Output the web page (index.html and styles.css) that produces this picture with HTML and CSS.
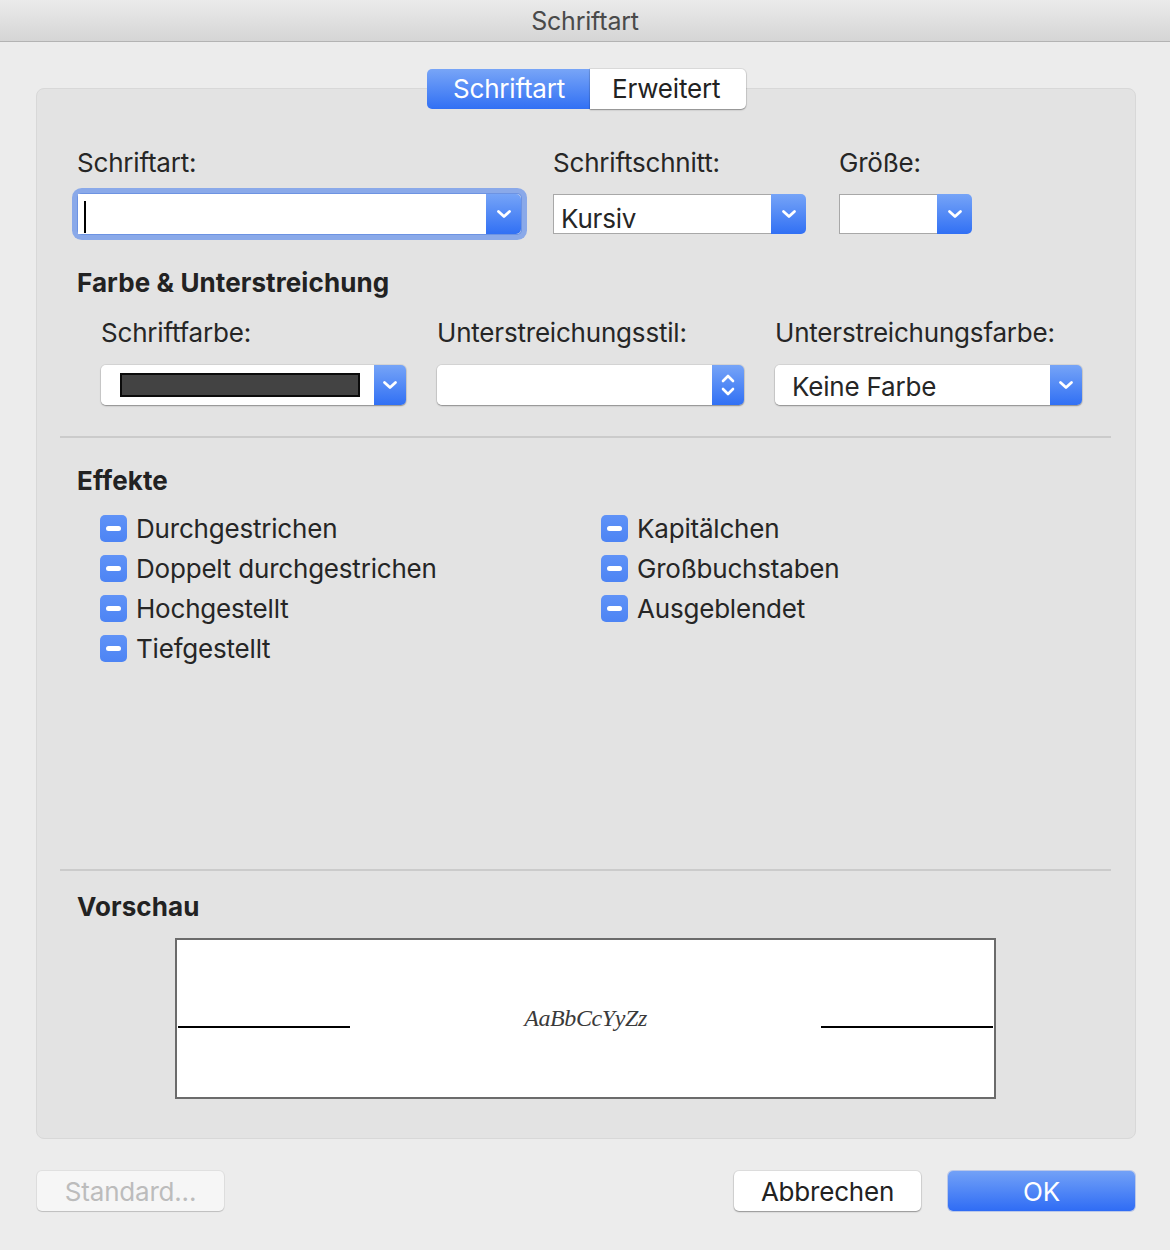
FILE: index.html
```html
<!DOCTYPE html>
<html lang="de">
<head>
<meta charset="utf-8">
<title>Schriftart</title>
<link rel="stylesheet" href="styles.css">
</head>
<body>
<div class="titlebar">Schriftart</div>
<div class="window">
  <div class="tabs">
    <div class="tab active">Schriftart</div>
    <div class="tab">Erweitert</div>
  </div>
  <div class="panel">
    <div class="row row-font">
      <div class="col col-font">
        <div class="label">Schriftart:</div>
        <div class="combo focus">
          <div class="combo-text"><span class="caret"></span></div>
          <div class="blue-btn"><svg width="16" height="10" viewBox="0 0 16 10"><path d="M2.5 2.5 L8 7.5 L13.5 2.5" fill="none" stroke="#fff" stroke-width="2.8" stroke-linecap="round" stroke-linejoin="round"/></svg></div>
        </div>
      </div>
      <div class="col col-style">
        <div class="label">Schriftschnitt:</div>
        <div class="combo">
          <div class="combo-text">Kursiv</div>
          <div class="blue-btn"><svg width="16" height="10" viewBox="0 0 16 10"><path d="M2.5 2.5 L8 7.5 L13.5 2.5" fill="none" stroke="#fff" stroke-width="2.8" stroke-linecap="round" stroke-linejoin="round"/></svg></div>
        </div>
      </div>
      <div class="col col-size">
        <div class="label">Größe:</div>
        <div class="combo">
          <div class="combo-text"></div>
          <div class="blue-btn"><svg width="16" height="10" viewBox="0 0 16 10"><path d="M2.5 2.5 L8 7.5 L13.5 2.5" fill="none" stroke="#fff" stroke-width="2.8" stroke-linecap="round" stroke-linejoin="round"/></svg></div>
        </div>
      </div>
    </div>

    <div class="heading heading-color">Farbe &amp; Unterstreichung</div>

    <div class="row row-popups">
      <div class="col col-pop">
        <div class="label">Schriftfarbe:</div>
        <div class="popup">
          <div class="popup-text"><span class="swatch"></span></div>
          <div class="blue-btn narrow"><svg width="16" height="10" viewBox="0 0 16 10"><path d="M2.5 2.5 L8 7.5 L13.5 2.5" fill="none" stroke="#fff" stroke-width="2.8" stroke-linecap="round" stroke-linejoin="round"/></svg></div>
        </div>
      </div>
      <div class="col col-pop wide">
        <div class="label">Unterstreichungsstil:</div>
        <div class="popup">
          <div class="popup-text"></div>
          <div class="blue-btn narrow"><svg width="16" height="26" viewBox="0 0 16 26"><path d="M3 9 L8 4 L13 9 M3 17 L8 22 L13 17" fill="none" stroke="#fff" stroke-width="2.6" stroke-linecap="round" stroke-linejoin="round"/></svg></div>
        </div>
      </div>
      <div class="col col-pop wide">
        <div class="label">Unterstreichungsfarbe:</div>
        <div class="popup">
          <div class="popup-text">Keine Farbe</div>
          <div class="blue-btn narrow"><svg width="16" height="10" viewBox="0 0 16 10"><path d="M2.5 2.5 L8 7.5 L13.5 2.5" fill="none" stroke="#fff" stroke-width="2.8" stroke-linecap="round" stroke-linejoin="round"/></svg></div>
        </div>
      </div>
    </div>

    <div class="sep sep-1"></div>

    <div class="heading heading-effects">Effekte</div>

    <div class="effects">
      <div class="effect-col left">
        <div class="check"><span class="box"><span class="dash"></span></span>Durchgestrichen</div>
        <div class="check"><span class="box"><span class="dash"></span></span>Doppelt durchgestrichen</div>
        <div class="check"><span class="box"><span class="dash"></span></span>Hochgestellt</div>
        <div class="check"><span class="box"><span class="dash"></span></span>Tiefgestellt</div>
      </div>
      <div class="effect-col">
        <div class="check"><span class="box"><span class="dash"></span></span>Kapitälchen</div>
        <div class="check"><span class="box"><span class="dash"></span></span>Großbuchstaben</div>
        <div class="check"><span class="box"><span class="dash"></span></span>Ausgeblendet</div>
      </div>
    </div>

    <div class="sep sep-2"></div>

    <div class="heading heading-preview">Vorschau</div>

    <div class="preview">
      <span class="pline"></span>
      <span class="ptext">AaBbCcYyZz</span>
      <span class="pline"></span>
    </div>
  </div>

  <div class="footer">
    <div class="btn disabled">Standard...</div>
    <div class="spacer"></div>
    <div class="btn">Abbrechen</div>
    <div class="btn primary">OK</div>
  </div>
</div>
</body>
</html>
```

FILE: styles.css
```css
* { box-sizing: border-box; }

html, body {
  margin: 0;
  padding: 0;
}

body {
  width: 1170px;
  height: 1250px;
  background: #ececec;
  font-family: Inter, "Liberation Sans", sans-serif;
  font-size: 26px;
  letter-spacing: -0.2px;
  color: #262626;
  overflow: hidden;
}

.titlebar {
  height: 42px;
  background: linear-gradient(#ebebeb, #d5d5d5);
  border-bottom: 1px solid #b3b3b3;
  text-align: center;
  line-height: 42px;
  color: #4a4a4a;
  font-size: 25px;
}

.window {
  padding-top: 27px;
}

.tabs {
  display: flex;
  justify-content: center;
  position: relative;
  z-index: 2;
  margin-left: 3px;
}

.tab {
  height: 40px;
  line-height: 40px;
  padding: 0 0 0 22px;
  background: #fff;
  color: #222;
  border-radius: 0 5px 5px 0;
  box-shadow: 0 0 0 1px rgba(0,0,0,0.07), 0 1px 1.5px rgba(0,0,0,0.35);
  width: 156px;
}

.tab.active {
  width: 163px;
  padding: 0 0 0 26px;
  background: linear-gradient(#78a5f7, #3170f4);
  color: #fff;
  border-radius: 5px 0 0 5px;
  box-shadow: none;
}

.panel {
  margin: -21px 0 0 36px;
  width: 1100px;
  height: 1051px;
  background: #e3e3e3;
  border: 1px solid #d8d8d8;
  border-radius: 8px;
  padding: 58px 24px 0 23px;
}

.row {
  display: flex;
}

.label {
  line-height: 32px;
  height: 32px;
  white-space: nowrap;
}

.row-font {
  padding-left: 17px;
}

.col-font { width: 444px; margin-right: 32px; }
.col-style { width: 253px; margin-right: 33px; }
.col-size { width: 133px; }

.combo {
  margin-top: 15px;
  height: 40px;
  display: flex;
}

.combo-text {
  flex: 1;
  background: #fff;
  border: 1px solid #a8a8a8;
  border-right: none;
  padding: 5px 0 0 7px;
  line-height: 38px;
  white-space: nowrap;
}

.combo.focus {
  margin-left: 1px;
  border-radius: 4px;
  box-shadow: 0 0 0 1px #6d93e2, 0 0 0 6px #8aa9e9;
}

.combo.focus .combo-text {
  border: none;
  padding: 0 0 0 6px;
  display: flex;
  align-items: flex-end;
}

.caret {
  display: block;
  width: 2px;
  height: 32px;
  background: #000;
  margin-bottom: 1px;
}

.blue-btn {
  width: 35px;
  flex: none;
  background: linear-gradient(#76a4f7, #3170f4);
  border-radius: 0 5px 5px 0;
  display: flex;
  align-items: center;
  justify-content: center;
}

.blue-btn.narrow {
  width: 32px;
}

.heading {
  font-weight: 700;
  line-height: 32px;
  height: 32px;
  padding-left: 17px;
  color: #222;
  letter-spacing: 0.1px;
}

.heading-color { margin-top: 33px; }

.row-popups {
  margin-top: 18px;
  padding-left: 41px;
}

.col-pop { width: 305px; margin-right: 31px; }
.col-pop.wide { width: 307px; }
.col-pop:last-child { margin-right: 0; }

.popup {
  margin-top: 16px;
  height: 40px;
  display: flex;
  border-radius: 5px;
  box-shadow: 0 0 0 1px rgba(0,0,0,0.06), 0 1px 1.5px rgba(0,0,0,0.35);
}

.popup-text {
  flex: 1;
  background: #fff;
  border-radius: 5px 0 0 5px;
  padding: 3px 0 0 17px;
  line-height: 37px;
  display: flex;
  align-items: center;
}

.swatch {
  display: block;
  width: 240px;
  height: 24px;
  margin: 0 0 3px 2px;
  background: #434343;
  border: 2px solid #0b0b0b;
}

.sep {
  height: 2px;
  background: #cbcbcb;
}

.sep-1 { margin-top: 31px; }

.heading-effects { margin-top: 27px; }

.effects {
  margin-top: 11px;
  padding-left: 40px;
  display: flex;
  height: 160px;
}

.effect-col.left { width: 501px; }

.check {
  height: 40px;
  display: flex;
  align-items: center;
  white-space: nowrap;
}

.box {
  width: 27px;
  height: 27px;
  border-radius: 5px;
  background: linear-gradient(#5f92f7, #4d84f4);
  display: flex;
  align-items: center;
  justify-content: center;
  margin-right: 9px;
  margin-top: 1px;
}

.dash {
  display: block;
  width: 15px;
  height: 5px;
  border-radius: 3px;
  background: #fff;
}

.sep-2 { margin-top: 201px; }

.heading-preview { margin-top: 20px; }

.preview {
  margin: 15px 0 0 115px;
  width: 821px;
  height: 161px;
  background: #fff;
  border: 2px solid #6b6b6b;
  display: flex;
  align-items: center;
  justify-content: space-between;
  padding: 0 1px;
}

.pline {
  display: block;
  width: 172px;
  height: 2px;
  background: #000;
  margin-top: 16px;
}

.ptext {
  font-family: "Liberation Serif", serif;
  font-style: italic;
  font-size: 24px;
  color: #3a3a3a;
  letter-spacing: -0.4px;
  margin-top: 0;
}

.footer {
  margin-top: 32px;
  padding: 0 35px 0 37px;
  display: flex;
}

.spacer { flex: 1; }

.btn {
  width: 187px;
  height: 40px;
  line-height: 42px;
  text-align: center;
  background: #fff;
  border-radius: 5px;
  box-shadow: 0 0 0 1px rgba(0,0,0,0.06), 0 1px 1.5px rgba(0,0,0,0.35);
  color: #222;
}

.btn.disabled {
  background: #f6f6f6;
  color: #bcbcbc;
  box-shadow: 0 0 0 1px rgba(0,0,0,0.05), 0 1px 1px rgba(0,0,0,0.15);
}

.btn.primary {
  margin-left: 27px;
  background: linear-gradient(#72a1f7, #2f6cf5);
  color: #fff;
  box-shadow: 0 0 0 1px rgba(40,90,220,0.25);
}
```
